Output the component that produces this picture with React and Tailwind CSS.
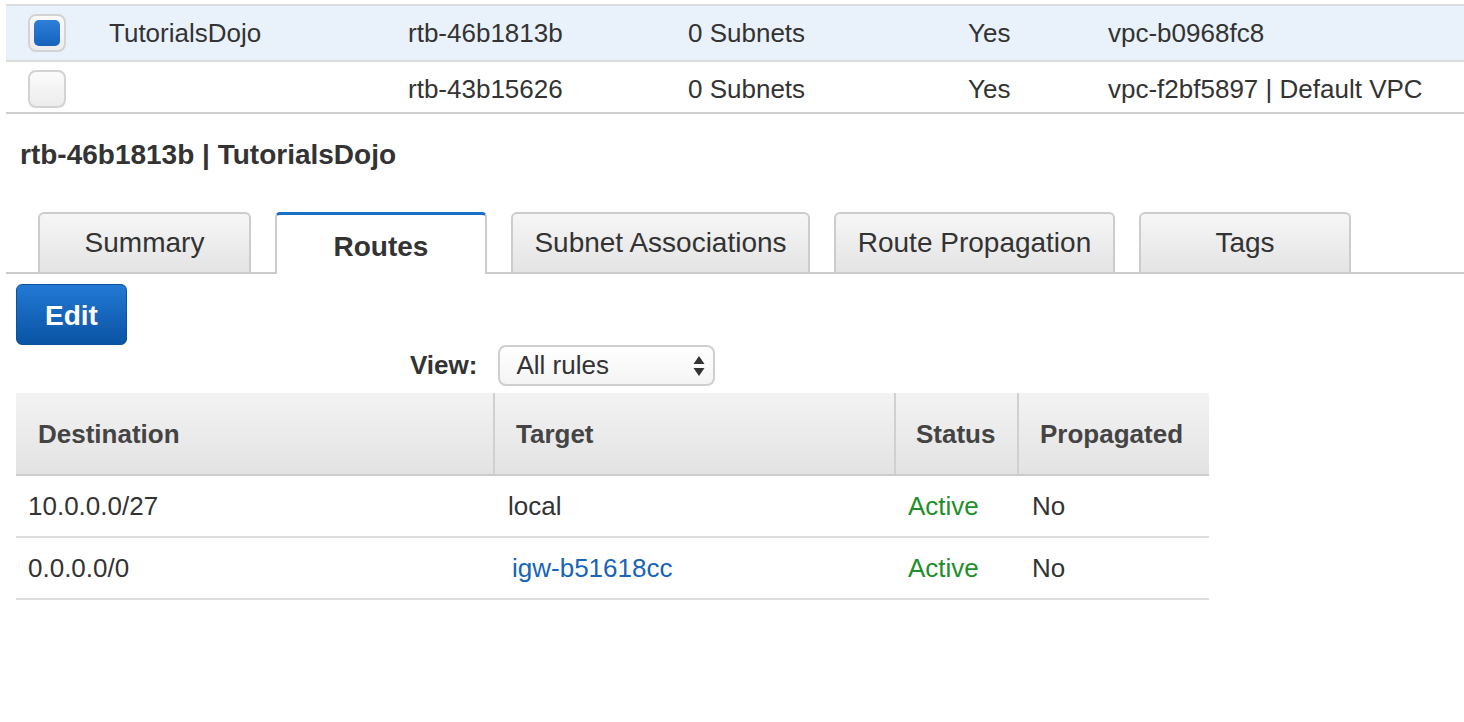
const rows = [
  { checked: true, name: "TutorialsDojo", id: "rtb-46b1813b", subnets: "0 Subnets", main: "Yes", vpc: "vpc-b0968fc8" },
  { checked: false, name: "", id: "rtb-43b15626", subnets: "0 Subnets", main: "Yes", vpc: "vpc-f2bf5897 | Default VPC" }
];

const tabs = [
  { label: "Summary", w: "w-[213px]" },
  { label: "Routes", w: "w-[212px]", active: true },
  { label: "Subnet Associations", w: "w-[299px]" },
  { label: "Route Propagation", w: "w-[281px]" },
  { label: "Tags", w: "w-[212px]" }
];

const routes = [
  { dest: "10.0.0.0/27", target: "local", link: false },
  { dest: "0.0.0.0/0", target: "igw-b51618cc", link: true }
];

const Checkbox = ({ checked }) => (
  <div className="w-[38px] h-[38px] rounded-[8px] border-2 border-[#d3d3d3] bg-gradient-to-b from-[#fbfbfb] to-[#ececec] flex items-center justify-center">
    {checked && (
      <div className="w-[26px] h-[26px] rounded-[5px] bg-gradient-to-b from-[#2e7fd9] to-[#1462bb]" />
    )}
  </div>
);

export default function App() {
  return (
    <div className="w-[1464px] h-[722px] bg-white text-[#333] font-['Liberation_Sans',Arial,sans-serif] overflow-hidden">
      {/* ROUTE TABLE LIST */}
      <div className="ml-[6px] mt-[4px] border-t-2 border-[#dcdcdc]">
        {rows.map((r, i) => (
          <div
            key={r.id}
            className={
              i === 0
                ? "flex items-center h-[56px] bg-[#e9f1fb] border-b-2 border-[#dcdcdc] text-[26px]"
                : "flex items-center h-[52px] pt-[4px] border-b-2 border-[#cfcfcf] text-[26px]"
            }
          >
            <div className="w-[103px] pl-[22px]">
              <Checkbox checked={r.checked} />
            </div>
            <div className="w-[299px]">{r.name}</div>
            <div className="w-[280px]">{r.id}</div>
            <div className="w-[280px]">{r.subnets}</div>
            <div className="w-[140px]">{r.main}</div>
            <div className="flex-1">{r.vpc}</div>
          </div>
        ))}
      </div>

      {/* DETAIL HEADER */}
      <h2 className="ml-[20px] mt-[26px] text-[28px] leading-[30px] font-bold">
        rtb-46b1813b | TutorialsDojo
      </h2>

      {/* TABS */}
      <div className="ml-[6px] mt-[42px] pl-[32px] flex items-end gap-[24px] border-b-2 border-[#cccccc] h-[62px]">
        {tabs.map(t =>
          t.active ? (
            <div
              key={t.label}
              className={`${t.w} h-[62px] -mb-[2px] bg-white border-x-2 border-[#cccccc] border-t-[3px] border-t-[#1a6ec3] rounded-t-[5px] flex items-center justify-center pt-[4px] text-[28px] font-bold`}
            >
              {t.label}
            </div>
          ) : (
            <div
              key={t.label}
              className={`${t.w} h-[60px] bg-gradient-to-b from-[#f6f6f6] to-[#e4e4e4] border-x-2 border-t-2 border-[#cccccc] rounded-t-[6px] flex items-center justify-center text-[28px]`}
            >
              {t.label}
            </div>
          )
        )}
      </div>

      {/* EDIT */}
      <button className="ml-[16px] mt-[10px] w-[111px] h-[61px] pt-[3px] rounded-[6px] border border-[#0c5199] bg-gradient-to-b from-[#2279d4] to-[#0a53a4] text-white text-[28px] font-bold">
        Edit
      </button>

      {/* VIEW FILTER */}
      <div className="flex items-center pl-[410px] gap-[21px]">
        <span className="text-[26px] font-bold">View:</span>
        <div className="w-[217px] h-[41px] shrink-0 rounded-[8px] border-2 border-[#cfcfcf] bg-gradient-to-b from-white to-[#f4f4f4] flex items-center justify-between pl-[16px] pr-[8px] text-[26px]">
          <span>All rules</span>
          <svg width="12" height="22" viewBox="0 0 12 22">
            <path d="M6 1 L11.5 9 L0.5 9 Z" fill="#333" />
            <path d="M6 21 L11.5 13 L0.5 13 Z" fill="#333" />
          </svg>
        </div>
      </div>

      {/* ROUTES TABLE */}
      <div className="ml-[16px] mt-[7px] w-[1193px]">
        <div className="flex h-[83px] bg-gradient-to-b from-[#f3f3f3] to-[#e3e3e3] border-b-2 border-[#cccccc] text-[26px] font-bold text-[#444]">
          <div className="w-[479px] pl-[22px] pt-[2px] flex items-center border-r-2 border-[#d0d0d0]">Destination</div>
          <div className="w-[401px] pl-[21px] pt-[2px] flex items-center border-r-2 border-[#d0d0d0]">Target</div>
          <div className="w-[123px] pl-[20px] pt-[2px] flex items-center border-r-2 border-[#d0d0d0]">Status</div>
          <div className="flex-1 pl-[21px] pt-[2px] flex items-center">Propagated</div>
        </div>
        {routes.map(r => (
          <div key={r.dest} className="flex h-[62px] border-b-2 border-[#dddddd] text-[26px] items-center">
            <div className="w-[479px] pl-[12px]">{r.dest}</div>
            <div className={r.link ? "w-[401px] pl-[17px] text-[#1764b8]" : "w-[401px] pl-[13px]"}>
              {r.target}
            </div>
            <div className="w-[123px] pl-[12px] text-[#1f8f2b]">Active</div>
            <div className="flex-1 pl-[13px]">No</div>
          </div>
        ))}
      </div>
    </div>
  );
}
